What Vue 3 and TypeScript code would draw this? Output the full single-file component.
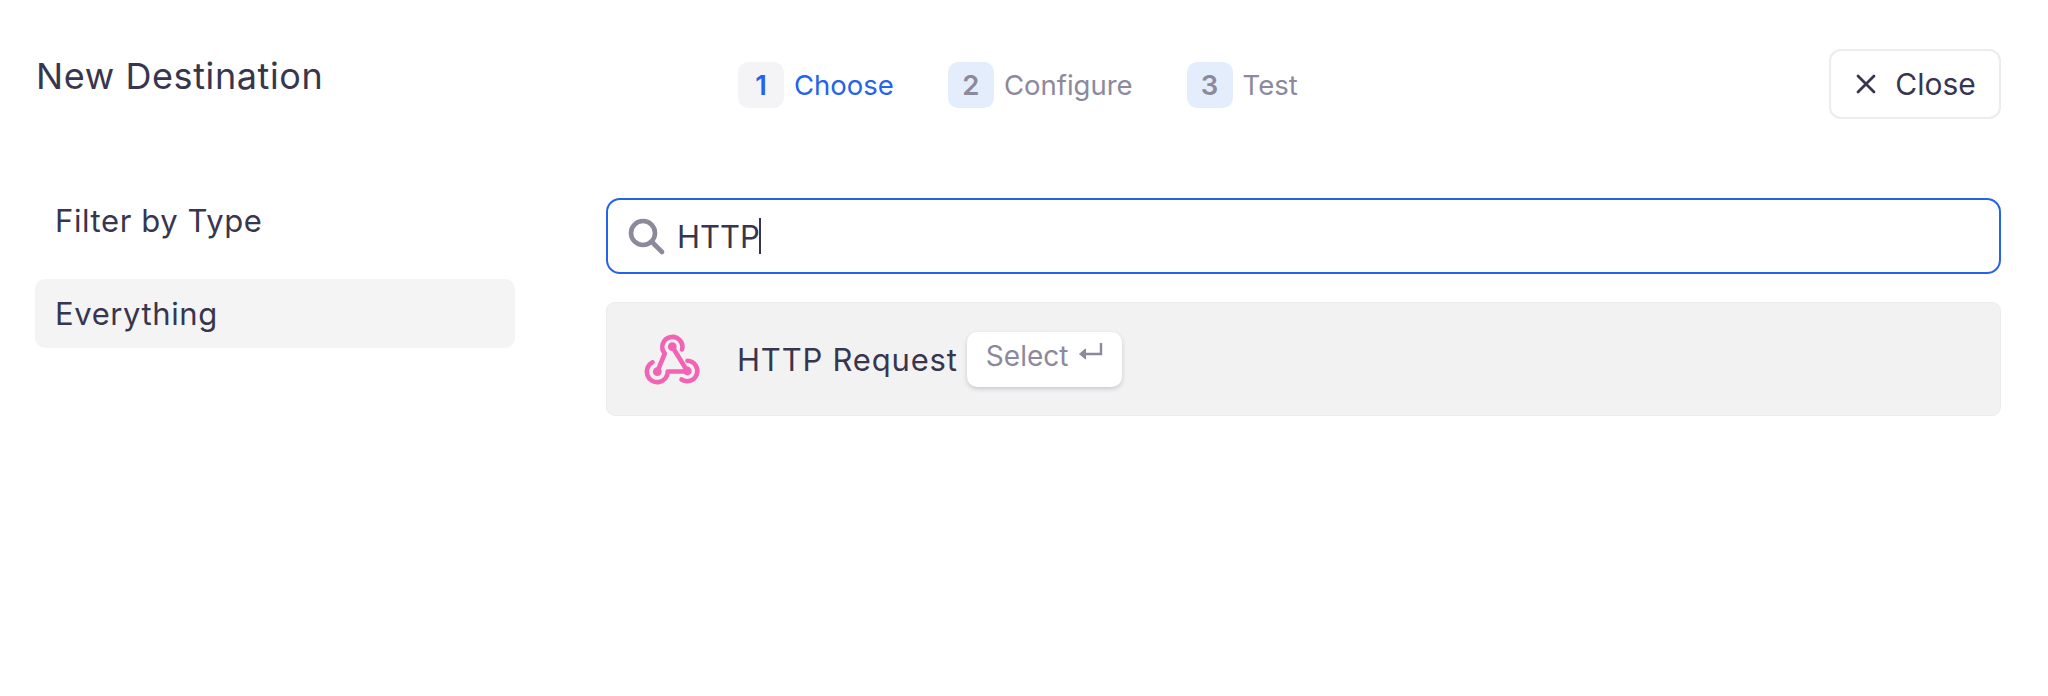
<script setup lang="ts">
const steps = [
  { n: 1, label: 'Choose', active: true },
  { n: 2, label: 'Configure', active: false },
  { n: 3, label: 'Test', active: false }
]
</script>

<template>
  <div class="page">
    <header class="top">
      <h1 class="title">New Destination</h1>
      <ol class="steps">
        <li v-for="s in steps" :key="s.n" class="step" :class="{ 'step--active': s.active }">
          <span class="step-num">{{ s.n }}</span>
          <span class="step-label">{{ s.label }}</span>
        </li>
      </ol>
      <button class="close">
        <svg width="24" height="24" viewBox="0 0 24 24" fill="none" stroke="currentColor" stroke-width="2.8" stroke-linecap="round">
          <path d="M4 4l16 16M20 4L4 20" />
        </svg>
        Close
      </button>
    </header>

    <div class="body">
      <aside class="side">
        <div class="side-head">Filter by Type</div>
        <div class="side-item">Everything</div>
      </aside>

      <main class="main">
        <div class="search">
          <svg class="search-icon" width="40" height="40" viewBox="0 0 40 40" fill="none" stroke="#8c899c" stroke-linecap="round">
            <circle cx="17" cy="17" r="12" stroke-width="4.6" />
            <path d="M26 26l10 10" stroke-width="4.6" />
          </svg>
          <span class="search-text">HTTP</span><span class="caret"></span>
        </div>

        <div class="result">
          <svg class="hook" width="60" height="60" viewBox="0 0 60 60" fill="none" stroke="#f263b4" stroke-width="4.6" stroke-linecap="round" stroke-linejoin="round">
            <path d="M41 20.5A10 10 0 1 0 23.8 24.5L16.3 42.7" />
            <path d="M31.3 17.7L46.3 42" />
            <path d="M11.5 33.3A10.5 10.5 0 1 0 26.8 42.5H46.3" />
            <path d="M46.5 31.8A10.2 10.2 0 1 1 40.5 50.5" />
            <circle cx="31.3" cy="17.7" r="4.4" fill="#f263b4" stroke="none" />
            <circle cx="16.3" cy="42.7" r="4.4" fill="#f263b4" stroke="none" />
            <circle cx="46.3" cy="42" r="4.4" fill="#f263b4" stroke="none" />
          </svg>
          <span class="result-name">HTTP Request</span>
          <span class="select">
            Select
            <svg class="return" width="26" height="24" viewBox="0 0 26 24" fill="none" stroke="#8c899c" stroke-width="2.4">
              <path d="M24 2v11H6" />
              <path d="M8.5 8L2.5 13l6 5z" fill="#8c899c" stroke-width="1" />
            </svg>
          </span>
        </div>
      </main>
    </div>
  </div>
</template>

<style>
html, body { background: #fff; }
</style>

<style scoped>
.page {
  width: 2048px;
  height: 696px;
  box-sizing: border-box;
  padding: 49px 47px 0 35px;
  font-family: Inter, "Liberation Sans", sans-serif;
  color: #38364f;
  overflow: hidden;
}

.top {
  display: flex;
  align-items: flex-start;
  height: 70px;
}
.title {
  margin: 6px 0 0 1px;
  width: 702px;
  font-size: 36px;
  line-height: 42px;
  font-weight: 400;
  letter-spacing: 0.6px;
}

.steps {
  display: flex;
  gap: 54px;
  list-style: none;
  margin: 13px 0 0;
  padding: 0;
  flex: 1;
}
.step {
  display: flex;
  align-items: center;
  gap: 10px;
  font-size: 27.5px;
  color: #8c899c;
}
.step-num {
  width: 46px;
  height: 46px;
  border-radius: 10px;
  background: #e4edfb;
  display: flex;
  align-items: center;
  justify-content: center;
  font-weight: 600;
}
.step--active { color: #2563eb; }
.step--active .step-num { background: #f4f4f7; }

.close {
  display: flex;
  align-items: center;
  justify-content: center;
  gap: 17px;
  width: 172px;
  height: 70px;
  padding: 0;
  background: #fff;
  border: 2px solid #ececef;
  border-radius: 12px;
  color: #38364f;
  font: inherit;
  font-size: 30px;
}

.body {
  display: flex;
  margin-top: 79px;
  gap: 91px;
}
.side { width: 480px; flex: none; }
.side-head {
  padding: 1px 0 0 20px;
  font-size: 31px;
  line-height: 44px;
  margin-bottom: 36px;
  letter-spacing: 0.6px;
}
.side-item {
  height: 69px;
  border-radius: 10px;
  background: #f4f4f5;
  padding-left: 20px;
  display: flex;
  align-items: center;
  font-size: 31px;
  letter-spacing: 0.6px;
}

.main { flex: 1; }
.search {
  height: 76px;
  box-sizing: border-box;
  border: 2px solid #2563eb;
  border-radius: 14px;
  display: flex;
  align-items: center;
  padding-left: 18px;
  font-size: 31px;
}
.search-icon { margin-right: 11px; }
.caret {
  width: 2px;
  height: 36px;
  margin-left: -1px;
  background: #38364f;
}

.result {
  margin-top: 28px;
  height: 114px;
  box-sizing: border-box;
  border: 1px solid #ebebeb;
  border-radius: 9px;
  background: #f2f2f2;
  display: flex;
  align-items: center;
  padding-left: 34px;
}
.hook { flex: none; }
.result-name {
  margin-left: 36px;
  font-size: 31px;
  letter-spacing: 0.8px;
}
.select {
  margin: 0 0 0 9px;
  height: 55px;
  width: 155px;
  box-sizing: border-box;
  padding: 0 0 6px 1px;
  background: #fff;
  border-radius: 10px;
  box-shadow: 0 2px 4px rgba(60, 50, 90, 0.22);
  display: flex;
  align-items: center;
  justify-content: center;
  gap: 9px;
  color: #8c899c;
  font-size: 28px;
}
.return { margin-top: -6px; }
</style>
